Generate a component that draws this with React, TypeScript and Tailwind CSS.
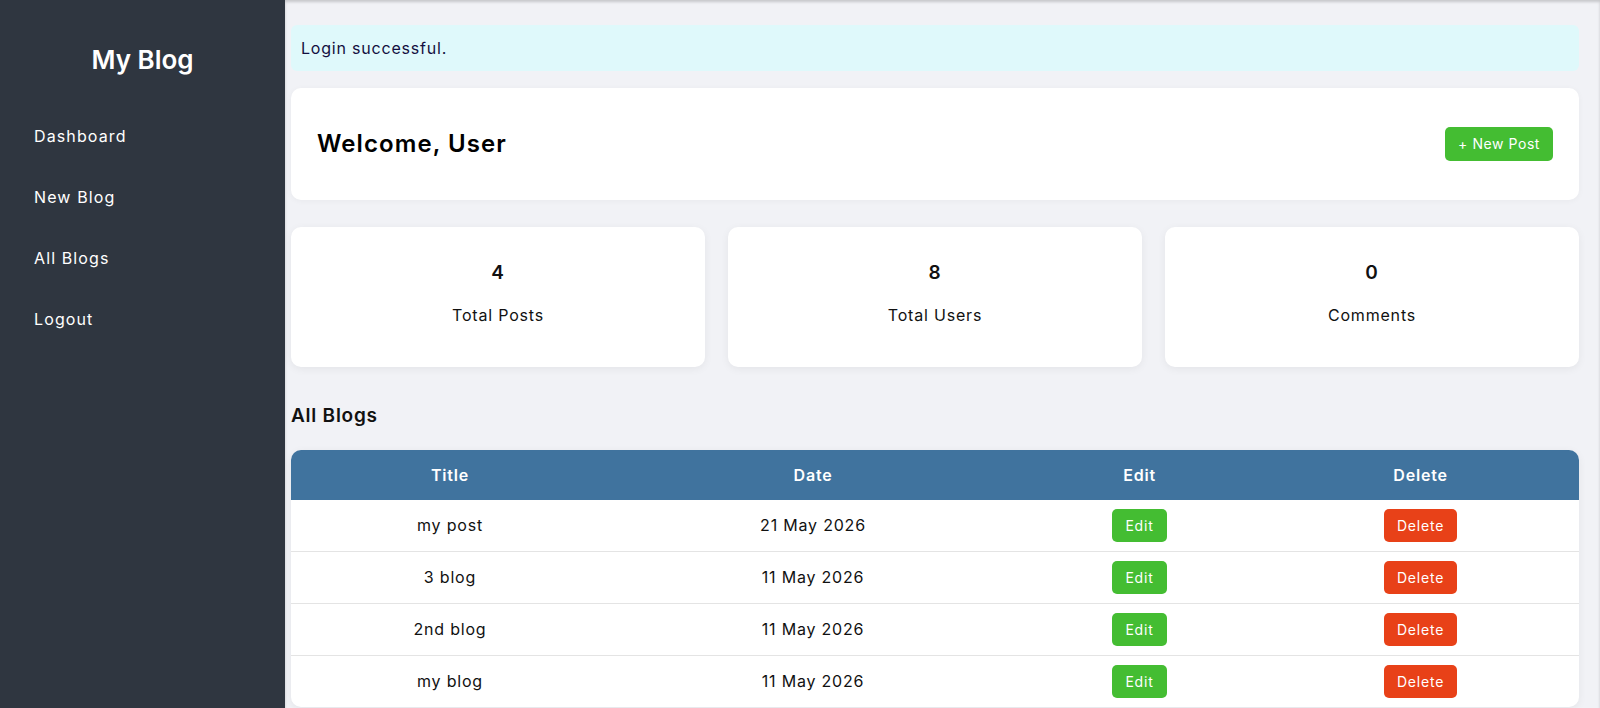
import React from "react";

const posts = [
  { id: 1, title: "my post", date: "21 May 2026" },
  { id: 2, title: "3 blog", date: "11 May 2026" },
  { id: 3, title: "2nd blog", date: "11 May 2026" },
  { id: 4, title: "my blog", date: "11 May 2026" },
];

const stats = [
  { value: 4, label: "Total Posts" },
  { value: 8, label: "Total Users" },
  { value: 0, label: "Comments" },
];

const navLinks = ["Dashboard", "New Blog", "All Blogs", "Logout"];

const App = () => {
  return (
    <div className="min-h-screen flex bg-[#f1f2f6] font-['Inter','Liberation_Sans',sans-serif] tracking-[0.05em] text-[#111]">
      {/* sidebar */}
      <aside className="w-[285px] shrink-0 bg-[#2f3640] text-white pt-[42px]">
        <h1 className="text-center text-[26px] leading-[36px] font-semibold tracking-normal mb-[27.5px]">My Blog</h1>
        <nav className="flex flex-col">
          {navLinks.map((link) => (
            <a key={link} href="#" className="h-[61px] flex items-center pl-[34px] text-[16px] tracking-[0.07em] text-white">
              {link}
            </a>
          ))}
        </nav>
      </aside>

      <main className="flex-1 pt-[25px] pl-[6px] pr-[21px] pb-4 shadow-[inset_0_2px_3px_rgba(0,0,0,0.18)]">
        <div className="h-[46px] flex items-center pl-[10px] rounded-[6px] bg-[#dff9fb] text-[#130f40] text-[16px]">
          Login successful.
        </div>

        <div className="mt-[16.5px] h-[112px] bg-white rounded-[10px] px-[26px] flex items-center justify-between shadow-[0_1px_6px_rgba(0,0,0,0.04)]">
          <h2 className="text-[24px] font-semibold tracking-[0.045em] text-black">Welcome, User</h2>
          <button className="h-[34px] px-[13px] rounded-[5px] bg-[#44bd32] text-white text-[14px] tracking-[0.04em]">
            + New Post
          </button>
        </div>

        <div className="mt-[27.5px] grid grid-cols-3 gap-[23px]">
          {stats.map((s) => (
            <div
              key={s.label}
              className="h-[140px] bg-white rounded-[10px] pt-[32px] flex flex-col items-center shadow-[0_2px_8px_rgba(0,0,0,0.06)]"
            >
              <span className="text-[19px] leading-[28px] font-semibold">{s.value}</span>
              <span className="mt-[16px] text-[16px] leading-[24px]">{s.label}</span>
            </div>
          ))}
        </div>

        <h3 className="mt-[34.5px] mb-[20px] text-[19px] leading-[28px] font-semibold tracking-[0.04em]">All Blogs</h3>

        <div className="bg-white rounded-[10px] overflow-hidden shadow-[0_2px_8px_rgba(0,0,0,0.06)]">
          <table className="w-full table-fixed border-collapse text-center">
            <colgroup>
              <col className="w-[318px]" />
              <col className="w-[408px]" />
              <col className="w-[245px]" />
              <col />
            </colgroup>
            <thead>
              <tr className="bg-[#40739e] text-white h-[50px]">
                <th className="font-semibold text-[16px]">Title</th>
                <th className="font-semibold text-[16px]">Date</th>
                <th className="font-semibold text-[16px]">Edit</th>
                <th className="font-semibold text-[16px]">Delete</th>
              </tr>
            </thead>
            <tbody>
              {posts.map((p, i) => (
                <tr key={p.id} className={i < posts.length - 1 ? "border-b border-[#e4e4e4]" : ""}>
                  <td className="py-[9px] text-[16px]">{p.title}</td>
                  <td className="py-[9px] text-[16px]">{p.date}</td>
                  <td className="py-[9px]">
                    <button className="h-[33px] px-[13px] rounded-[5px] bg-[#44bd32] text-white text-[14px]">Edit</button>
                  </td>
                  <td className="py-[9px]">
                    <button className="h-[33px] px-[13px] rounded-[5px] bg-[#e84118] text-white text-[14px]">Delete</button>
                  </td>
                </tr>
              ))}
            </tbody>
          </table>
        </div>
      </main>
    </div>
  );
};

export default App;
